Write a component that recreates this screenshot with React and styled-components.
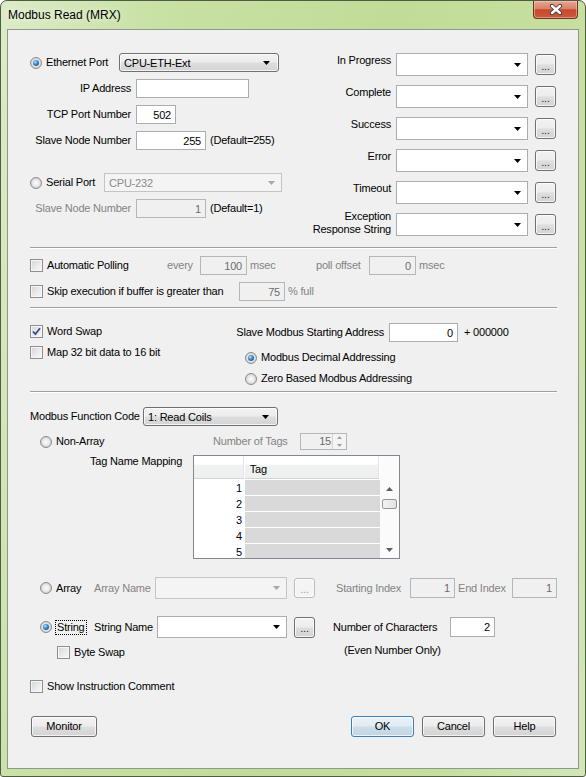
import styled, { createGlobalStyle } from "styled-components";

const GlobalStyle = createGlobalStyle`
  * { box-sizing: border-box; }
  html, body { margin: 0; padding: 0; background: #ffffff; }
  body {
    font-family: "Liberation Sans", Arial, sans-serif;
    font-size: 11px;
    letter-spacing: -0.2px;
    color: #000;
  }
`;

const Arrow = ({ dim }) => (
  <svg width="7" height="4" viewBox="0 0 7 4">
    <polygon points="0,0 7,0 3.5,4" fill={dim ? "#a7a7a7" : "#000"} />
  </svg>
);

const Tick = () => (
  <svg width="11" height="11" viewBox="0 0 11 11">
    <path d="M2 5.5 L4.4 8.2 L9 2.2" fill="none" stroke="#2b4f94" strokeWidth="1.8" />
  </svg>
);

export default function App() {
  return (
    <>
      <GlobalStyle />
      <Window>
        <TitleBar>
          <Title>Modbus Read (MRX)</Title>
          <CloseButton>
            <svg width="14" height="11" viewBox="0 0 14 11">
              <path d="M3 2 L11 9 M11 2 L3 9" stroke="#3a3a3a" strokeWidth="4.2" strokeLinecap="round" />
              <path d="M3 2 L11 9 M11 2 L3 9" stroke="#ffffff" strokeWidth="2.4" strokeLinecap="round" />
            </svg>
          </CloseButton>
        </TitleBar>

        <Client>
          {/* port + status tags */}
          <Split>
            <Column $w={253} $gap={7}>
              <Row>
                <Option $w={89}><Radio $on />Ethernet Port</Option>
                <DropList $w={160}>CPU-ETH-Ext<Arrow /></DropList>
              </Row>
              <Row>
                <FieldLabel $w={106}>IP Address</FieldLabel>
                <TextBox $w={113} />
              </Row>
              <Row>
                <FieldLabel $w={106}>TCP Port Number</FieldLabel>
                <TextBox $w={40}>502</TextBox>
              </Row>
              <Row>
                <FieldLabel $w={106}>Slave Node Number</FieldLabel>
                <TextBox $w={70}>255</TextBox>
                <Note $ml={4}>(Default=255)</Note>
              </Row>
              <Row $mt={16}>
                <Option $w={74}><Radio />Serial Port</Option>
                <Combo $w={178} $disabled>CPU-232<Arrow dim /></Combo>
              </Row>
              <Row>
                <FieldLabel $w={106} $dim>Slave Node Number</FieldLabel>
                <TextBox $w={70} $disabled>1</TextBox>
                <Note $ml={4}>(Default=1)</Note>
              </Row>
            </Column>

            <Column $w={256} $gap={9}>
              {["In Progress", "Complete", "Success", "Error", "Timeout"].map((t) => (
                <Row $h={23} key={t}>
                  <SideLabel>{t}</SideLabel>
                  <Combo $w={132} $h={23}><span /><Arrow /></Combo>
                  <DotsButton>...</DotsButton>
                </Row>
              ))}
              <Row $h={23}>
                <SideLabel $two>Exception<br />Response String</SideLabel>
                <Combo $w={132} $h={23}><span /><Arrow /></Combo>
                <DotsButton>...</DotsButton>
              </Row>
            </Column>
          </Split>

          <Separator $mt={11} />

          {/* polling */}
          <Column $gap={7} $mt={7}>
            <Row>
              <Option $w={137}><CheckBox />Automatic Polling</Option>
              <Note $w={33} $dim>every</Note>
              <TextBox $w={47} $disabled>100</TextBox>
              <Note $w={69} $dim $pl={3}>msec</Note>
              <Note $w={53} $dim>poll offset</Note>
              <TextBox $w={47} $disabled>0</TextBox>
              <Note $dim $pl={3}>msec</Note>
            </Row>
            <Row>
              <Option $w={209}><CheckBox />Skip execution if buffer is greater than</Option>
              <TextBox $w={46} $disabled>75</TextBox>
              <Note $dim $pl={3}>% full</Note>
            </Row>
          </Column>

          <Separator $mt={6} />

          {/* swapping + address */}
          <Split $mt={14}>
            <Column $w={205} $gap={4}>
              <Row $h={17}><Option><CheckBox $on />Word Swap</Option></Row>
              <Row $h={17}><Option><CheckBox />Map 32 bit data to 16 bit</Option></Row>
            </Column>
            <Column $gap={4} $grow>
              <Row>
                <FieldLabel $w={154}>Slave Modbus Starting Address</FieldLabel>
                <TextBox $w={69}>0</TextBox>
                <Note $ml={6}>+ 000000</Note>
              </Row>
              <Row $h={17} $mt={3}>
                <Option $ml={10}><Radio $on />Modbus Decimal Addressing</Option>
              </Row>
              <Row $h={17}>
                <Option $ml={10}><Radio />Zero Based Modbus Addressing</Option>
              </Row>
            </Column>
          </Split>

          <Separator $mt={4} />

          {/* function code + data */}
          <Row $mt={14}>
            <Note $w={113}>Modbus Function Code</Note>
            <DropList $w={135}>1: Read Coils<Arrow /></DropList>
          </Row>
          <Row $h={17} $mt={7}>
            <Option $w={173} $ml={10}><Radio />Non-Array</Option>
            <Note $w={87} $dim>Number of Tags</Note>
            <Spin>
              <SpinValue>15</SpinValue>
              <SpinArrows>
                <svg width="5" height="3" viewBox="0 0 5 3"><polygon points="0,3 5,3 2.5,0" fill="#a0a0a0" /></svg>
                <svg width="5" height="3" viewBox="0 0 5 3"><polygon points="0,0 5,0 2.5,3" fill="#a0a0a0" /></svg>
              </SpinArrows>
            </Spin>
          </Row>
          <Row $h={104} $mt={5}>
            <Note $w={103} $ml={60} $top>Tag Name Mapping</Note>
            <Grid>
              <GridMain>
                <GridHead>
                  <HeadCell $w={50} />
                  <HeadCell $w={135}>Tag</HeadCell>
                </GridHead>
                {[1, 2, 3, 4, 5].map((n) => (
                  <GridRow key={n}>
                    <RowNum>{n}</RowNum>
                    <TagCell />
                  </GridRow>
                ))}
              </GridMain>
              <ScrollBar>
                <ScrollArrow>
                  <svg width="7" height="4" viewBox="0 0 7 4"><polygon points="0,4 7,4 3.5,0" fill="#606060" /></svg>
                </ScrollArrow>
                <Thumb />
                <ScrollArrow $end>
                  <svg width="7" height="4" viewBox="0 0 7 4"><polygon points="0,0 7,0 3.5,4" fill="#606060" /></svg>
                </ScrollArrow>
              </ScrollBar>
            </Grid>
          </Row>

          <Row $h={22} $mt={18}>
            <Option $w={54} $ml={10}><Radio />Array</Option>
            <Note $w={61} $dim>Array Name</Note>
            <Combo $w={132} $h={22} $disabled><span /><Arrow dim /></Combo>
            <DotsButton $disabled>...</DotsButton>
            <Note $w={74} $ml={21} $dim>Starting Index</Note>
            <TextBox $w={45} $h={20} $disabled>1</TextBox>
            <Note $w={57} $dim $pl={3}>End Index</Note>
            <TextBox $w={45} $h={20} $disabled>1</TextBox>
          </Row>
          <Row $h={22} $mt={17}>
            <Option $w={54} $ml={10}><Radio $on /><Focus>String</Focus></Option>
            <Note $w={63}>String Name</Note>
            <Combo $w={130} $h={22}><span /><Arrow /></Combo>
            <DotsButton>...</DotsButton>
            <Note $w={117} $ml={18}>Number of Characters</Note>
            <TextBox $w={45} $h={20}>2</TextBox>
          </Row>
          <Row $h={17} $mt={6}>
            <Option $w={287} $ml={27}><CheckBox />Byte Swap</Option>
            <Note $top>(Even Number Only)</Note>
          </Row>
          <Row $h={17} $mt={17}>
            <Option><CheckBox />Show Instruction Comment</Option>
          </Row>

          <ButtonBar>
            <PushButton $w={66} $ml={1}>Monitor</PushButton>
            <Spacer />
            <PushButton $primary>OK</PushButton>
            <PushButton>Cancel</PushButton>
            <PushButton>Help</PushButton>
          </ButtonBar>
        </Client>
      </Window>
    </>
  );
}

const Window = styled.div`
  width: 586px;
  height: 777px;
  border: 1px solid #4f5b44;
  border-radius: 7px 7px 3px 3px;
  background: linear-gradient(100deg, #dcecc8 0%, #c8e1a4 22%, #c1dc98 55%, #c6df9f 80%, #d2e7b6 100%);
  padding: 0 6px 7px 6px;
  display: flex;
  flex-direction: column;
  overflow: hidden;
`;

const TitleBar = styled.div`
  height: 28px;
  flex: none;
  display: flex;
  justify-content: space-between;
  align-items: flex-start;
`;

const Title = styled.div`
  margin: 7px 0 0 1px;
  font-size: 12px;
  letter-spacing: 0;
  line-height: 15px;
  color: #000;
  text-shadow: 0 0 6px rgba(255, 255, 255, 0.9);
`;

const CloseButton = styled.div`
  width: 45px;
  height: 18px;
  margin-right: 1px;
  border: 1px solid #6e3325;
  border-top: none;
  border-radius: 0 0 4px 4px;
  background: linear-gradient(#e7a892 0%, #d98068 45%, #c9482d 52%, #c95a3a 100%);
  box-shadow: inset 0 0 0 1px rgba(255, 220, 200, 0.45);
  display: flex;
  align-items: center;
  justify-content: center;
`;

const Client = styled.div`
  flex: 1;
  border: 1px solid #8e9790;
  background: #f0f0f0;
  padding: 23px 22px 0 22px;
  display: flex;
  flex-direction: column;
`;

const Split = styled.div`
  display: flex;
  justify-content: space-between;
  margin-top: ${(p) => p.$mt || 0}px;
`;

const Column = styled.div`
  display: flex;
  flex-direction: column;
  gap: ${(p) => p.$gap || 0}px;
  width: ${(p) => (p.$w ? `${p.$w}px` : "auto")};
  flex: ${(p) => (p.$grow ? 1 : "none")};
  margin-top: ${(p) => p.$mt || 0}px;
`;

const Row = styled.div`
  display: flex;
  align-items: center;
  flex: none;
  height: ${(p) => p.$h || 19}px;
  margin-top: ${(p) => p.$mt || 0}px;
`;

const Separator = styled.div`
  height: 2px;
  flex: none;
  margin-top: ${(p) => p.$mt || 0}px;
  margin-right: -1px;
  border-top: 1px solid #a0a0a0;
  border-bottom: 1px solid #ffffff;
`;

const Option = styled.label`
  flex: none;
  display: flex;
  align-items: center;
  gap: 4px;
  width: ${(p) => (p.$w ? `${p.$w}px` : "auto")};
  margin-left: ${(p) => p.$ml || 0}px;
  white-space: nowrap;
  line-height: 13px;
`;

const FieldLabel = styled.span`
  flex: none;
  width: ${(p) => p.$w}px;
  padding-right: 5px;
  text-align: right;
  white-space: nowrap;
  line-height: 13px;
  color: ${(p) => (p.$dim ? "#838383" : "#000")};
`;

const SideLabel = styled.span`
  flex: none;
  width: 96px;
  padding-right: 5px;
  text-align: right;
  line-height: 13px;
  white-space: nowrap;
  align-self: ${(p) => (p.$two ? "flex-end" : "flex-start")};
  margin-top: ${(p) => (p.$two ? 0 : 1)}px;
`;

const Note = styled.span`
  flex: none;
  width: ${(p) => (p.$w ? `${p.$w}px` : "auto")};
  margin-left: ${(p) => p.$ml || 0}px;
  padding-left: ${(p) => p.$pl || 0}px;
  align-self: ${(p) => (p.$top ? "flex-start" : "center")};
  white-space: nowrap;
  line-height: 13px;
  color: ${(p) => (p.$dim ? "#838383" : "#000")};
`;

const Focus = styled.span`
  outline: 1px dotted #000;
  outline-offset: 0;
  padding: 0 1px;
`;

const Radio = styled.span`
  flex: none;
  width: 12px;
  height: 12px;
  border-radius: 50%;
  border: 1px solid #8b8b8b;
  background: radial-gradient(circle at 50% 50%, #fdfdfd 0%, #e9e9e9 45%, #cfcfcf 75%, #f2f2f2 100%);
  display: flex;
  align-items: center;
  justify-content: center;
  &::after {
    content: "";
    display: ${(p) => (p.$on ? "block" : "none")};
    width: 6px;
    height: 6px;
    border-radius: 50%;
    background: radial-gradient(circle at 38% 35%, #b5e6ff 0%, #3a8ed2 40%, #0f4f8c 85%);
  }
`;

const CheckBox = ({ $on }) => <CheckFrame>{$on && <Tick />}</CheckFrame>;

const CheckFrame = styled.span`
  flex: none;
  width: 13px;
  height: 13px;
  border: 1px solid #8e8f8f;
  background: linear-gradient(135deg, #d4d4d4 0%, #e9e9e9 50%, #f8f8f8 100%);
  box-shadow: inset 0 0 0 1px #f6f6f6;
  display: flex;
  align-items: center;
  justify-content: center;
`;

const TextBox = styled.div`
  flex: none;
  width: ${(p) => p.$w}px;
  height: ${(p) => p.$h || 19}px;
  border: 1px solid ${(p) => (p.$disabled ? "#b4b7ba" : "#abadb3")};
  background: ${(p) => (p.$disabled ? "#f0f0f0" : "#ffffff")};
  color: ${(p) => (p.$disabled ? "#6d6d6d" : "#000")};
  display: flex;
  align-items: center;
  justify-content: flex-end;
  padding: 0 4px;
`;

const DropList = styled.div`
  flex: none;
  width: ${(p) => p.$w}px;
  height: 19px;
  border: 1px solid #707070;
  border-radius: 3px;
  background: linear-gradient(#f3f3f3 0%, #ececec 48%, #dedede 52%, #d3d3d3 100%);
  box-shadow: inset 0 0 0 1px rgba(255, 255, 255, 0.75);
  display: flex;
  align-items: center;
  justify-content: space-between;
  padding: 0 8px 0 4px;
`;

const Combo = styled.div`
  flex: none;
  width: ${(p) => p.$w}px;
  height: ${(p) => p.$h || 19}px;
  border: 1px solid ${(p) => (p.$disabled ? "#c2c5c8" : "#abadb3")};
  background: ${(p) => (p.$disabled ? "#f4f4f4" : "#ffffff")};
  color: ${(p) => (p.$disabled ? "#8a8a8a" : "#000")};
  display: flex;
  align-items: center;
  justify-content: space-between;
  padding: 0 6px 0 4px;
`;

const DotsButton = styled.div`
  flex: none;
  width: 21px;
  height: ${(p) => (p.$disabled ? 20 : 21)}px;
  margin-left: 7px;
  border: 1px solid ${(p) => (p.$disabled ? "#b9bcbf" : "#707070")};
  border-radius: 3px;
  background: ${(p) =>
    p.$disabled
      ? "#f4f4f4"
      : "linear-gradient(#f3f3f3 0%, #ececec 48%, #dedede 52%, #d3d3d3 100%)"};
  box-shadow: inset 0 0 0 1px rgba(255, 255, 255, 0.75);
  color: ${(p) => (p.$disabled ? "#a0a0a0" : "#1c1c50")};
  display: flex;
  align-items: center;
  justify-content: center;
  padding-top: 3px;
  line-height: 11px;
`;

const Spin = styled.div`
  flex: none;
  width: 47px;
  height: 17px;
  border: 1px solid #b4b7ba;
  background: #f0f0f0;
  display: flex;
`;

const SpinValue = styled.span`
  flex: 1;
  color: #6d6d6d;
  text-align: right;
  padding-right: 1px;
  line-height: 15px;
`;

const SpinArrows = styled.span`
  width: 14px;
  border-left: 1px solid #d6d6d6;
  display: flex;
  flex-direction: column;
  align-items: center;
  justify-content: space-around;
  background: #f4f4f4;
`;

const Grid = styled.div`
  flex: none;
  width: 207px;
  height: 104px;
  border: 1px solid #828790;
  background: #ffffff;
  display: flex;
  overflow: hidden;
`;

const GridMain = styled.div`
  width: 186px;
  display: flex;
  flex-direction: column;
`;

const GridHead = styled.div`
  display: flex;
  height: 24px;
  flex: none;
  padding-bottom: 1px;
`;

const HeadCell = styled.div`
  width: ${(p) => p.$w}px;
  height: 23px;
  margin-right: 1px;
  border-bottom: 1px solid #d5d5d5;
  border-right: 1px solid #e4e4e4;
  background: linear-gradient(#ffffff 0%, #ffffff 38%, #f1f2f2 40%, #eeefef 100%);
  padding: 7px 0 0 5px;
  line-height: 13px;
`;

const GridRow = styled.div`
  display: flex;
  height: 16px;
  flex: none;
`;

const RowNum = styled.div`
  width: 51px;
  text-align: right;
  padding-right: 3px;
  line-height: 16px;
  color: #000020;
`;

const TagCell = styled.div`
  width: 135px;
  background: #d9d9d9;
  border-bottom: 1px solid #ffffff;
`;

const ScrollBar = styled.div`
  flex: 1;
  display: flex;
  flex-direction: column;
  align-items: center;
  padding-top: 24px;
  background: #fbfbfb;
`;

const ScrollArrow = styled.div`
  width: 17px;
  height: 17px;
  display: flex;
  align-items: center;
  justify-content: center;
  margin-top: ${(p) => (p.$end ? "auto" : 0)};
`;

const Thumb = styled.div`
  width: 15px;
  height: 10px;
  margin-top: 2px;
  border: 1px solid #979797;
  border-radius: 2px;
  background: linear-gradient(90deg, #f3f3f3, #e2e2e2);
`;

const ButtonBar = styled.div`
  display: flex;
  align-items: center;
  gap: 8px;
  height: 21px;
  margin-top: 21px;
`;

const Spacer = styled.div`
  flex: 1;
`;

const PushButton = styled.div`
  flex: none;
  width: ${(p) => p.$w || 63}px;
  height: 21px;
  margin-left: ${(p) => p.$ml || 0}px;
  border: 1px solid ${(p) => (p.$primary ? "#3c7fb1" : "#707070")};
  border-radius: 3px;
  background: ${(p) =>
    p.$primary
      ? "linear-gradient(#eaf2f8 0%, #e1ebf4 48%, #cddde9 52%, #c1d5e4 100%)"
      : "linear-gradient(#f3f3f3 0%, #ececec 48%, #dedede 52%, #d3d3d3 100%)"};
  box-shadow: inset 0 0 0 1px rgba(255, 255, 255, 0.7);
  display: flex;
  align-items: center;
  justify-content: center;
  line-height: 13px;
`;
